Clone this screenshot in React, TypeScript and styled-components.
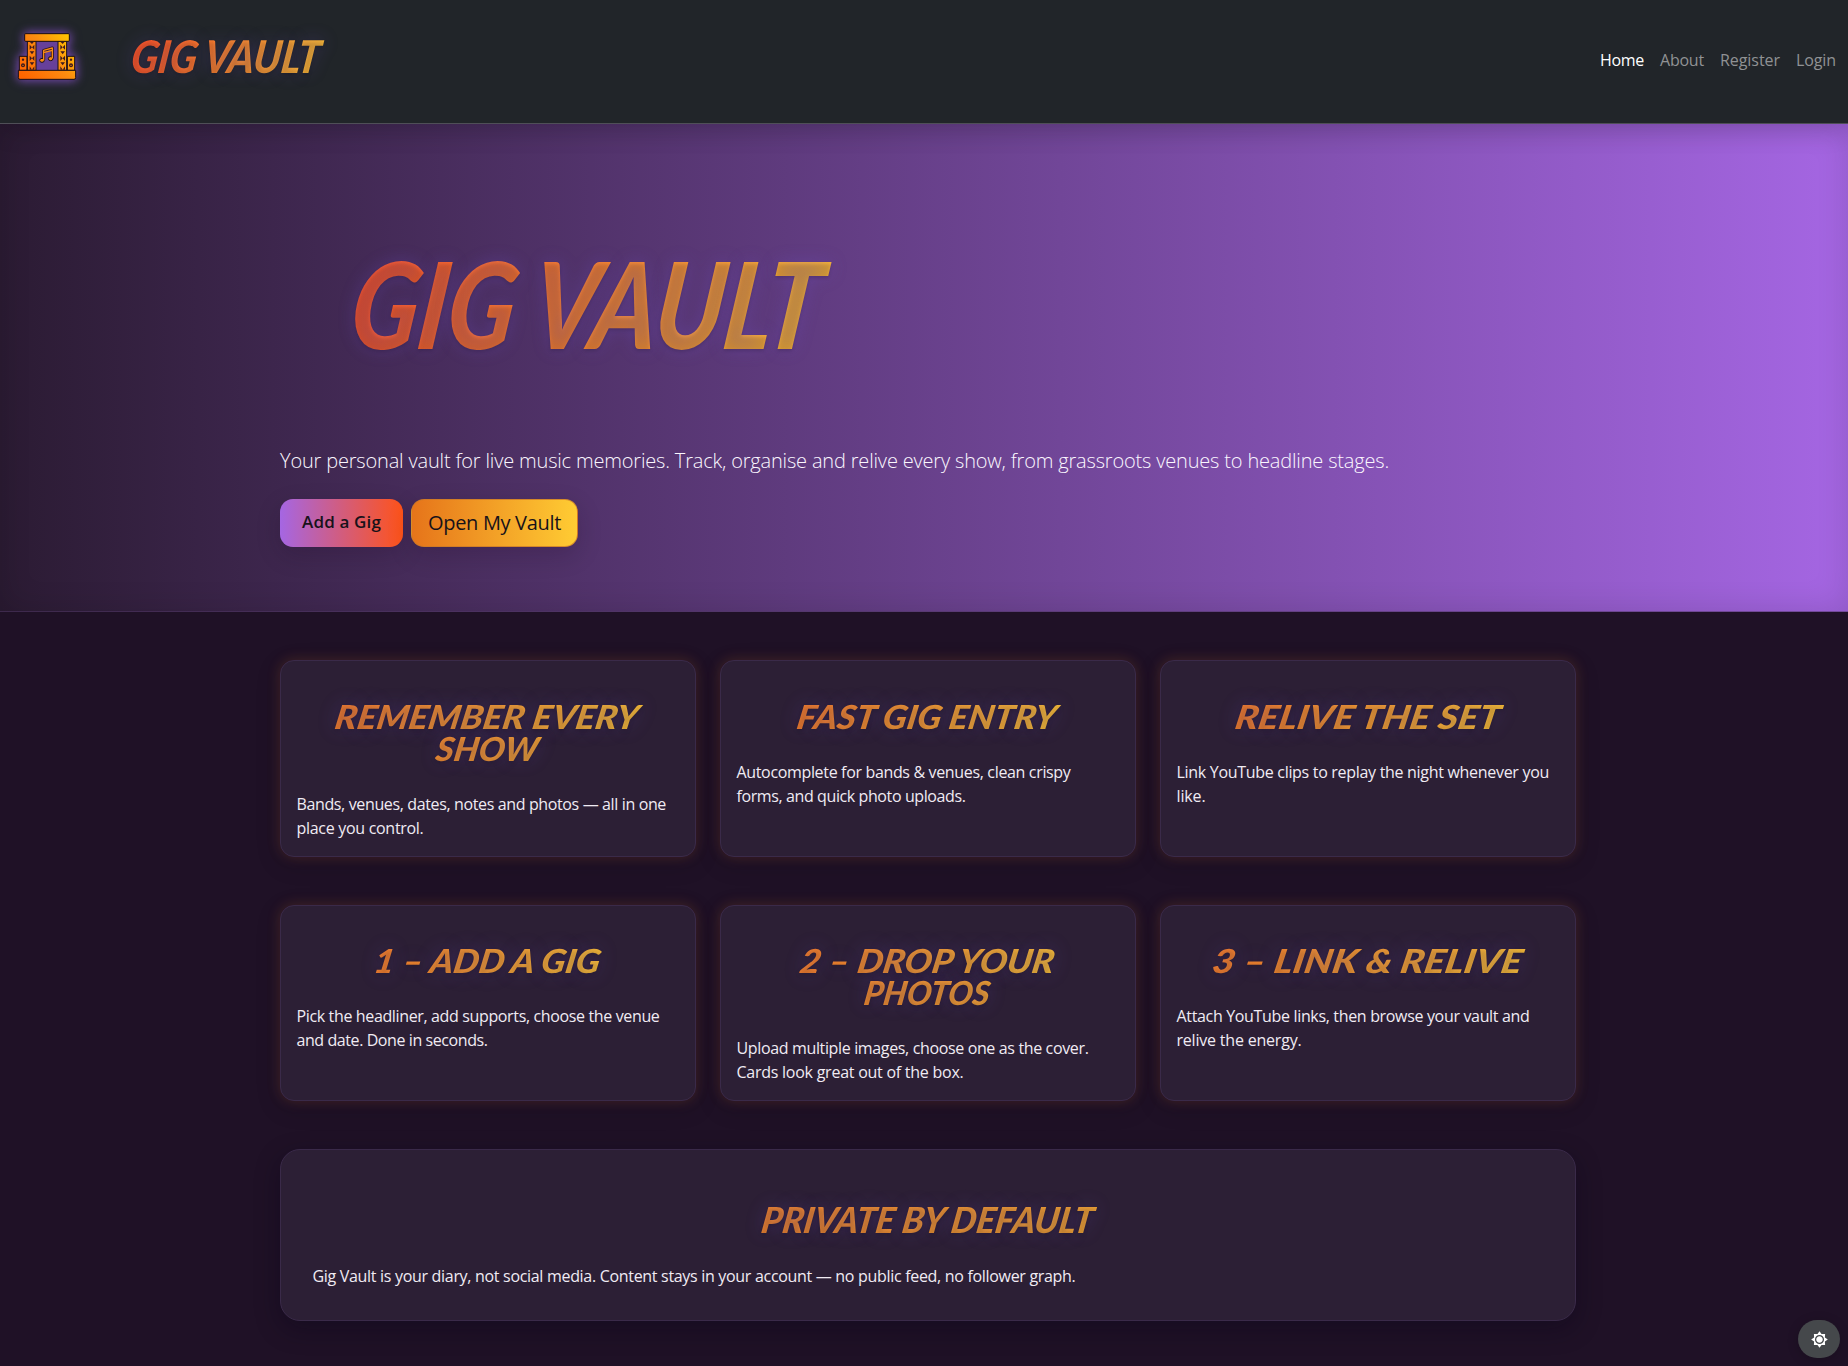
import React, { useLayoutEffect, useRef, useState } from "react";
import styled, { createGlobalStyle } from "styled-components";

const GlobalStyle = createGlobalStyle`
  *, *::before, *::after { box-sizing: border-box; }
  body {
    margin: 0;
    background: #1f1126;
    color: #f0ebf3;
    font: 400 16px/24px "Open Sans", "Noto Sans", sans-serif;
  }
`;

const Page = styled.div`
  height: 1366px;
  overflow: hidden;
  background: #1f1126;
`;

const Line = styled.span`
  display: block;
  width: max-content;
  white-space: pre;
`;

/** One line of text whose tracking is adjusted so that it spans `width` pixels. */
function FitLine({ width, children }: { width: number; children: string }) {
  const ref = useRef<HTMLSpanElement>(null);
  const [tracking, setTracking] = useState(0);
  useLayoutEffect(() => {
    if (ref.current) {
      const natural = ref.current.getBoundingClientRect().width;
      setTracking((width - natural) / children.length);
    }
  }, [width, children]);
  return (
    <Line ref={ref} style={{ letterSpacing: tracking }}>
      {children}
    </Line>
  );
}

const DisplayBox = styled.span`
  display: flex;
  justify-content: center;
`;

const DisplayText = styled.span<{ $from: string; $to: string }>`
  flex: none;
  padding: 0 0.12em;
  white-space: pre;
  text-transform: uppercase;
  color: transparent;
  background-image: linear-gradient(105deg, ${(p) => p.$from}, ${(p) => p.$to});
  background-clip: text;
  -webkit-background-clip: text;
  text-shadow: 0 2px 4px rgba(0, 0, 0, 0.15), 0 0 18px rgba(110, 80, 200, 0.3);
`;

interface DisplayLineProps {
  width: number;
  from?: string;
  to?: string;
  children: string;
}

/** A slanted headline line, condensed or widened to span `width` pixels. */
function DisplayLine({ width, from = "#f07a2a", to = "#f6bd35", children }: DisplayLineProps) {
  const ref = useRef<HTMLSpanElement>(null);
  const [scale, setScale] = useState(1);
  useLayoutEffect(() => {
    if (ref.current) setScale(width / ref.current.offsetWidth);
  }, [width, children]);
  return (
    <DisplayBox style={{ width }}>
      <DisplayText ref={ref} $from={from} $to={to} style={{ transform: `scaleX(${scale}) skewX(-9deg)` }}>
        {children}
      </DisplayText>
    </DisplayBox>
  );
}

const Navbar = styled.header`
  position: relative;
  z-index: 1;
  height: 124px;
  display: flex;
  align-items: flex-start;
  padding: 0 12px 0 0;
  background: #212529;
  border-bottom: 1px solid #4f4f57;
  box-shadow: 0 6px 24px rgba(0, 0, 0, 0.14);
`;

const LogoLink = styled.a`
  display: block;
  margin: 32px 0 0 17px;
  height: 50px;
  svg {
    display: block;
    overflow: visible;
    filter: drop-shadow(0 0 5px rgba(150, 86, 225, 0.6)) drop-shadow(0 0 5px rgba(150, 86, 225, 0.35));
  }
`;

const Display = styled.h2<{ $size: number; $leading: number }>`
  display: flex;
  flex-direction: column;
  align-items: center;
  margin: 0;
  font-family: Lato, "Open Sans", sans-serif;
  font-weight: 900;
  font-style: italic;
  font-size: ${(p) => p.$size}px;
  line-height: ${(p) => p.$leading}px;
`;

const Brand = styled(Display)`
  margin: 32px 0 0 50px;
`;

const NavLinks = styled.nav`
  display: flex;
  gap: 16px;
  margin: 48px 0 0 auto;
`;

const NavLink = styled.a<{ $active?: boolean }>`
  color: ${(p) => (p.$active ? "#ffffff" : "#909294")};
`;

const Hero = styled.section`
  height: 488px;
  padding: 104px 0 0 280px;
  background: linear-gradient(90deg, #2b1b33 0%, #a566e3 100%) border-box;
  box-shadow: inset 0 0 32px rgba(0, 0, 0, 0.14);
  border-bottom: 1px solid rgba(76, 52, 96, 0.55);
`;

const HeroTitle = styled(Display)`
  align-items: flex-start;
  padding-left: 61px;
`;

const Lead = styled.p`
  margin: 68px 0 23px;
  font-size: 20px;
  line-height: 30px;
  font-weight: 300;
  color: #fbf7ff;
`;

const Actions = styled.div`
  display: flex;
  gap: 8px;
`;

const Button = styled.button<{ $kind: "primary" | "accent" }>`
  display: flex;
  align-items: center;
  justify-content: center;
  height: 48px;
  width: ${(p) => (p.$kind === "primary" ? 123 : 167)}px;
  padding: 0;
  border: ${(p) => (p.$kind === "primary" ? "0" : "1px solid rgba(200, 120, 40, 0.75)")};
  border-radius: 13px;
  color: #17121a;
  font-family: inherit;
  font-size: ${(p) => (p.$kind === "primary" ? 17 : 20)}px;
  line-height: ${(p) => (p.$kind === "primary" ? 26 : 28)}px;
  padding-bottom: ${(p) => (p.$kind === "primary" ? 2 : 0)}px;
  font-weight: ${(p) => (p.$kind === "primary" ? 600 : 400)};
  background: ${(p) =>
    p.$kind === "primary"
      ? "linear-gradient(90deg, #a566e3, #ff5319)"
      : "linear-gradient(90deg, #e6741a, #ffcc33)"};
  box-shadow: 0 8px 24px rgba(20, 8, 30, 0.18);
`;

const Main = styled.main`
  width: 1296px;
  margin: 48px 0 0 280px;
  display: grid;
  grid-template-rows: 197px 196px 172px;
  row-gap: 48px;
`;

const CardRow = styled.div<{ $lift?: number }>`
  --lift: ${(p) => p.$lift ?? 0}px;
  display: grid;
  grid-template-columns: repeat(3, 416px);
  column-gap: 24px;
`;

const Card = styled.article`
  padding: calc(39px - var(--lift)) 15.5px 0;
  background: #2c1f35;
  border: 1px solid #3a2a49;
  border-radius: 14px;
  box-shadow: 0 0 14px rgba(255, 140, 50, 0.18), 0 6px 24px rgba(10, 4, 20, 0.2);
`;

const CardTitle = styled(Display)`
  margin-bottom: 28px;
`;

const CardText = styled.p`
  margin: 0;
`;

const Panel = styled.section`
  padding: 52px 31.5px 0;
  background: #2c1f35;
  border: 1px solid #3a2a49;
  border-radius: 20px;
  box-shadow: 0 8px 24px rgba(10, 6, 24, 0.4);
`;

const ThemeToggle = styled.button`
  position: fixed;
  right: 8px;
  bottom: 8px;
  width: 42px;
  height: 38px;
  padding: 0;
  display: flex;
  align-items: center;
  justify-content: center;
  border: 0;
  border-radius: 19px;
  background: #45484b;
  box-shadow: 0 2px 12px rgba(0, 0, 0, 0.2);
`;

type Fitted = [text: string, width: number];
interface CardData {
  title: Fitted[];
  body: Fitted[];
}

const features: CardData[] = [
  {
    title: [["Remember Every", 312], ["show", 110]],
    body: [["Bands, venues, dates, notes and photos — all in one", 369.5], ["place you control.", 127]],
  },
  {
    title: [["Fast Gig Entry", 268]],
    body: [["Autocomplete for bands & venues, clean crispy", 334], ["forms, and quick photo uploads.", 229]],
  },
  {
    title: [["Relive The set", 274]],
    body: [["Link YouTube clips to replay the night whenever you", 372.5], ["like.", 29]],
  },
];

const steps: CardData[] = [
  {
    title: [["1 – Add a gig", 235]],
    body: [["Pick the headliner, add supports, choose the venue", 363], ["and date. Done in seconds.", 191]],
  },
  {
    title: [["2 – Drop your", 263], ["photos", 133]],
    body: [["Upload multiple images, choose one as the cover.", 352], ["Cards look great out of the box.", 227]],
  },
  {
    title: [["3 – Link & Relive", 319]],
    body: [["Attach YouTube links, then browse your vault and", 353], ["relive the energy.", 125]],
  },
];

function InfoCard({ title, body }: CardData) {
  return (
    <Card>
      <CardTitle $size={33} $leading={32}>
        {title.map(([text, width], i) =>
          i === 0 ? (
            <DisplayLine key={text} width={width}>{text}</DisplayLine>
          ) : (
            <DisplayLine key={text} width={width} from="#f08a2c" to="#f0a230">{text}</DisplayLine>
          )
        )}
      </CardTitle>
      <CardText>
        {body.map(([text, width]) => (
          <FitLine key={text} width={width}>{text}</FitLine>
        ))}
      </CardText>
    </Card>
  );
}

function StageLogo() {
  return (
    <svg width="60" height="50" viewBox="51 97 180 150" fill="none" stroke="#190f14" strokeWidth="3" strokeLinejoin="round">
      <defs>
        <linearGradient id="stage" x1="60" y1="220" x2="200" y2="100" gradientUnits="userSpaceOnUse">
          <stop offset="0" stopColor="#ff6500" />
          <stop offset="0.55" stopColor="#fb8a10" />
          <stop offset="1" stopColor="#ffc400" />
        </linearGradient>
      </defs>
      <rect x="108" y="124" width="66" height="90" fill="#67409a" stroke="none" />
      <g fill="url(#stage)">
        <path d="M58 170h23v42H58zM202 170h22v42h-22z" />
        <path d="M82 124h26v88H82zM174 124h26v88h-26z" />
        <rect x="74" y="102" width="134" height="23" rx="3" />
        <path d="M55 212h172v22q0 5-5 5H60q-5 0-5-5z" />
      </g>
      <g fill="#3d1a1f" stroke="none">
        <path d="M89 126h13l-6 7zM89 135v15l7-7zM103 135v15l-7-7zM89 155h14l-7 9zM89 168v16l7-8zM103 168v16l-7-8zM89 188h14l-7 9zM89 200v10h7zM103 200v10h-7z" />
        <path d="M181 126h13l-6 7zM181 135v15l7-7zM195 135v15l-7-7zM181 155h14l-7 9zM181 168v16l7-8zM195 168v16l-7-8zM181 188h14l-7 9zM181 200v10h7zM195 200v10h-7z" />
        <circle cx="69" cy="180" r="3.5" />
        <circle cx="69" cy="197" r="6" />
        <circle cx="213" cy="180" r="3.5" />
        <circle cx="213" cy="197" r="6" />
      </g>
      <circle cx="69" cy="197" r="2" fill="#fb8a10" stroke="none" />
      <circle cx="213" cy="197" r="2" fill="#fb8a10" stroke="none" />
      <path d="M131 181v-29l26-7v31" stroke="#2a1620" strokeWidth="9" />
      <g fill="#f98a12">
        <ellipse cx="126" cy="182" rx="7" ry="6" />
        <ellipse cx="152" cy="177" rx="7" ry="6" />
      </g>
      <path d="M131 181v-29l26-7v31M131 159l26-7" stroke="#f98a12" strokeWidth="4" />
    </svg>
  );
}

function SunIcon() {
  return (
    <svg width="17" height="17" viewBox="-8.5 -8.5 17 17">
      <path
        fill="#fff"
        d="M0-8.3 2-5.4 5.6-5.6 5.4-2 8.3 0 5.4 2 5.6 5.6 2 5.4 0 8.3-2 5.4-5.6 5.6-5.4 2-8.3 0-5.4-2-5.6-5.6-2-5.4z"
      />
      <circle r="3.9" fill="#fff" stroke="#45484b" strokeWidth="1.3" />
    </svg>
  );
}

export default function App() {
  return (
    <Page>
      <GlobalStyle />
      <Navbar>
        <LogoLink>
          <StageLogo />
        </LogoLink>
        <Brand as="div" $size={45} $leading={48}>
          <DisplayLine width={199} from="#ff4e20" to="#fcc034">Gig Vault</DisplayLine>
        </Brand>
        <NavLinks>
          <NavLink $active><FitLine width={44}>Home</FitLine></NavLink>
          <NavLink><FitLine width={44}>About</FitLine></NavLink>
          <NavLink><FitLine width={60}>Register</FitLine></NavLink>
          <NavLink><FitLine width={40}>Login</FitLine></NavLink>
        </NavLinks>
      </Navbar>
      <Hero>
        <HeroTitle as="h1" $size={120} $leading={150}>
          <DisplayLine width={494} from="#ff4e20" to="#fcc034">Gig Vault</DisplayLine>
        </HeroTitle>
        <Lead>
          <FitLine width={1109}>
            Your personal vault for live music memories. Track, organise and relive every show, from grassroots venues to headline stages.
          </FitLine>
        </Lead>
        <Actions>
          <Button $kind="primary"><FitLine width={79}>Add a Gig</FitLine></Button>
          <Button $kind="accent"><FitLine width={133}>Open My Vault</FitLine></Button>
        </Actions>
      </Hero>
      <Main>
        <CardRow>{features.map((c) => <InfoCard key={c.title[0][0]} {...c} />)}</CardRow>
        <CardRow $lift={1}>{steps.map((c) => <InfoCard key={c.title[0][0]} {...c} />)}</CardRow>
        <Panel>
          <CardTitle $size={36} $leading={34}>
            <DisplayLine width={340} from="#ec822c" to="#eea330">Private by default</DisplayLine>
          </CardTitle>
          <CardText>
            <FitLine width={763}>
              Gig Vault is your diary, not social media. Content stays in your account — no public feed, no follower graph.
            </FitLine>
          </CardText>
        </Panel>
      </Main>
      <ThemeToggle aria-label="Toggle theme">
        <SunIcon />
      </ThemeToggle>
    </Page>
  );
}
